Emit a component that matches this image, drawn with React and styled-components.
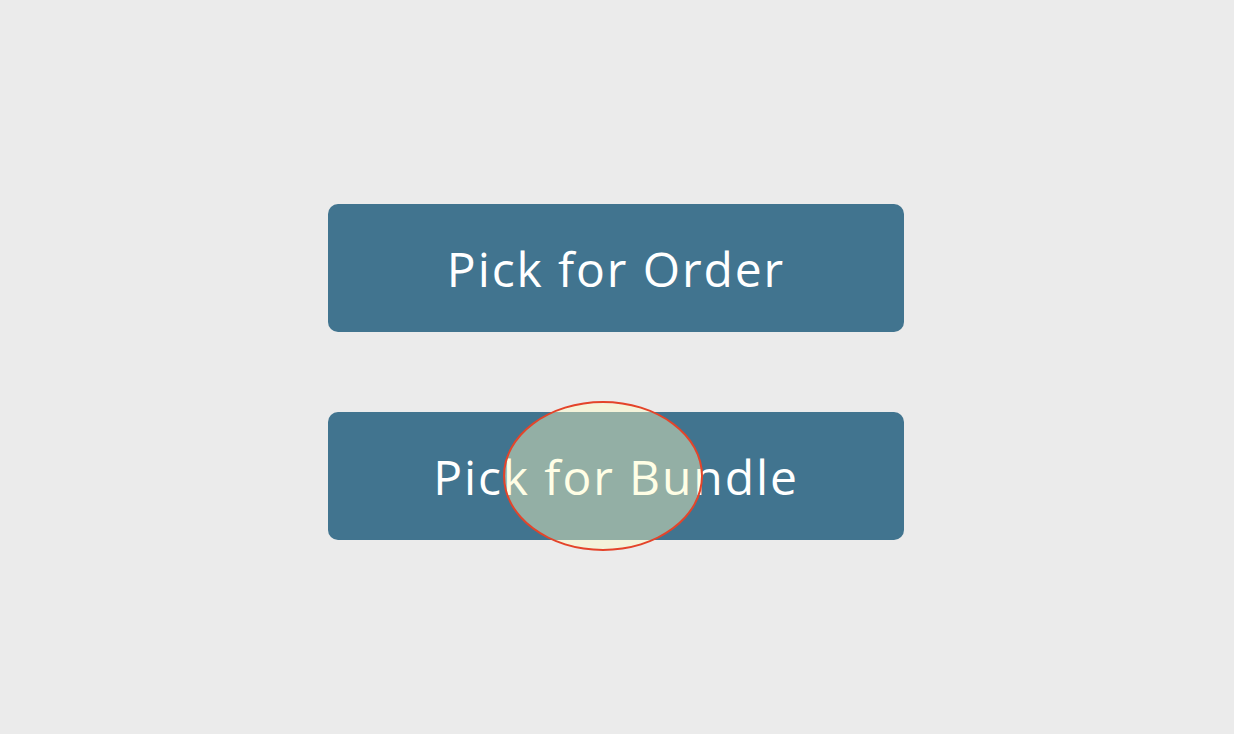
import React from 'react'
import styled, { createGlobalStyle } from 'styled-components'

const Global = createGlobalStyle`
  html, body {
    margin: 0;
    padding: 0;
    background: #ebebeb;
  }
`

const Page = styled.div`
  width: 100%;
  min-height: 734px;
  box-sizing: border-box;
  padding-top: 204px;
  padding-right: 2px;
  display: flex;
  flex-direction: column;
  align-items: center;
  gap: 80px;
`

const Button = styled.button`
  position: relative;
  width: 576px;
  height: 128px;
  border: none;
  border-radius: 10px;
  background: #41748f;
  color: #ffffff;
  font-family: "Open Sans", "Noto Sans", sans-serif;
  font-size: 48px;
  font-weight: 400;
  letter-spacing: 1.9px;
  cursor: pointer;
  display: flex;
  align-items: center;
  justify-content: center;
  padding: 0;
`

const Spot = styled.div`
  position: absolute;
  left: ${props => props.x}px;
  top: ${props => props.y}px;
  width: 196px;
  height: 146px;
  border: 2px solid #e4442a;
  border-radius: 50%;
  background: rgba(255, 252, 195, 0.43);
  pointer-events: none;
`

const App = () => {
  return (
    <>
      <Global />
      <Page>
        <Button>Pick for Order</Button>
        <Button>
          Pick for Bundle
          <Spot x={175} y={-11} />
        </Button>
      </Page>
    </>
  )
}

export default App
